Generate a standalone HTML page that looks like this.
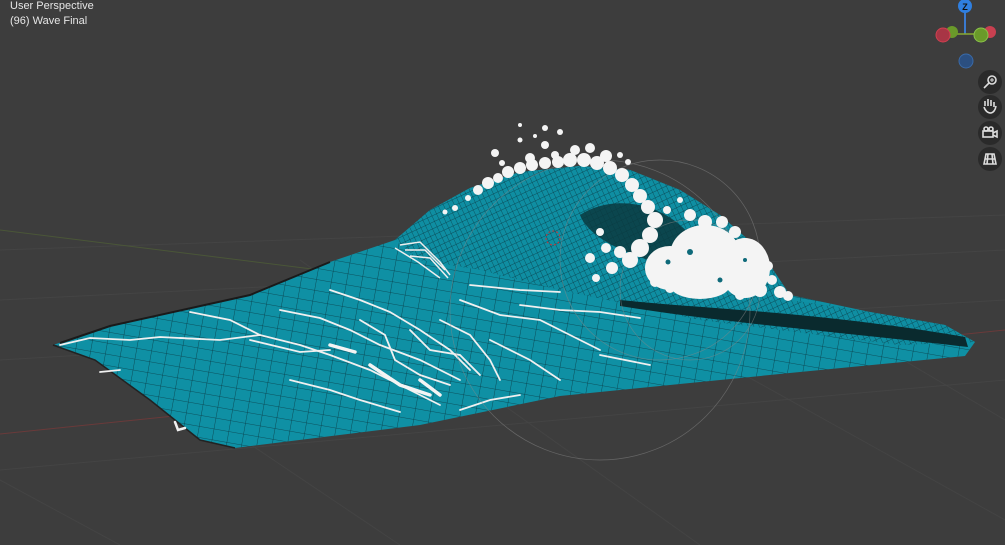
<!DOCTYPE html>
<html><head><meta charset="utf-8"><style>
html,body{margin:0;padding:0;background:#3d3d3d;width:1005px;height:545px;overflow:hidden}
.t{position:absolute;left:10px;color:#e6e6e6;font:11px "Liberation Sans",sans-serif}
</style></head><body>
<svg width="1005" height="545" style="position:absolute;left:0;top:0">
<defs>
<pattern id="g" width="15" height="11" patternUnits="userSpaceOnUse" patternTransform="rotate(10)">
<path d="M0 0H15M0 0V11" stroke="#0a3c46" stroke-width="0.8" fill="none"/>
</pattern>
<pattern id="g2" width="5" height="6" patternUnits="userSpaceOnUse" patternTransform="rotate(-25)">
<path d="M0 0H5M0 0V6" stroke="#0a3c46" stroke-width="0.7" fill="none"/>
</pattern>
</defs>
<rect width="1005" height="545" fill="#3d3d3d"/>
<g stroke="#444" stroke-width="1" fill="none">
<path d="M0 300 L1005 250M0 360 L1005 300M0 470 L1005 380M0 250 L1005 215M120 545 L0 480M400 545 L80 330M700 545 L300 260M1005 520 L520 250M1005 420 L700 240"/>
</g>
<path d="M0 434 L1005 330" stroke="#6a3a3a" stroke-width="1"/>
<path d="M0 230 L560 300" stroke="#4a5638" stroke-width="1"/>
<!-- sheet -->
<path id="sh" d="M53 345 L110 326 L250 295 L330 262 L395 240 L430 210 L470 188 L520 172 L580 166 L630 170 L680 190 L720 215 L760 250 L790 295 L870 312 L945 325 L975 342 L965 356 L800 372 L560 396 L420 425 L235 448 L200 440 L150 400 L95 360 Z" fill="#0f90a4"/>
<path d="M53 345 L110 326 L250 295 L330 262 L395 240 L430 210 L470 188 L520 172 L580 166 L630 170 L680 190 L720 215 L760 250 L790 295 L870 312 L945 325 L975 342 L965 356 L800 372 L560 396 L420 425 L235 448 L200 440 L150 400 L95 360 Z" fill="url(#g)"/>
<path d="M395 240 L430 210 L470 188 L520 172 L580 166 L630 170 L680 190 L720 215 L760 250 L790 300 L870 312 L945 325 L975 342 L900 345 L700 320 L560 290 L480 270 L420 260 Z" fill="#0f8ea2"/>
<path d="M395 240 L430 210 L470 188 L520 172 L580 166 L630 170 L680 190 L720 215 L760 250 L790 300 L870 312 L945 325 L975 342 L900 345 L700 320 L560 290 L480 270 L420 260 Z" fill="url(#g2)"/>
<path d="M580 215 C610 195 660 200 690 235 L665 265 C630 255 590 240 580 215Z" fill="#0b3a40" opacity="0.85"/>
<path d="M620 300 C720 310 820 312 965 337 L968 347 C820 330 720 322 620 306Z" fill="#0a2a2e"/>
<path d="M53 345 L95 360 L150 400 L200 440 L235 448" stroke="#222" stroke-width="1.5" fill="none"/>
<path d="M60 343 L110 326 L250 295 L330 262" stroke="#1a1a1a" stroke-width="2" fill="none"/>
<!-- streaks -->
<g stroke="#f0f0f0" stroke-linecap="round" fill="none" stroke-width="1.8">
<path d="M60 345 L90 338 L130 340 L160 337 L200 339"/>
<path d="M180 338 L220 340 L260 335 L300 345 L330 355 L370 370 L410 390 L440 405"/>
<path d="M190 312 L230 320 L260 335"/>
<path d="M280 310 L320 318 L350 330 L380 345 L420 360 L460 380"/>
<path d="M330 290 L360 300 L390 312 L420 330 L450 350 L470 370"/>
<path d="M360 320 L385 335 L395 360 L420 375 L450 385"/>
<path d="M410 330 L430 350 L460 355 L480 375"/>
<path d="M440 320 L470 335 L490 360 L500 380"/>
<path d="M250 340 L300 352 L330 350"/>
<path d="M460 300 L500 315 L540 320 L570 335 L600 350"/>
<path d="M490 340 L530 360 L560 380"/>
<path d="M290 380 L330 390 L360 400 L400 412"/>
<path d="M460 410 L490 400 L520 395"/>
<path d="M520 305 L560 310 L600 312 L640 318"/>
<path d="M470 285 L520 290 L560 292"/>
<path d="M600 355 L650 365"/>
<path d="M100 372 L120 370"/>
<path d="M175 422 L178 430 L185 428" stroke-width="2.5"/>
</g>
<g stroke="#f4f4f4" stroke-width="3.5" stroke-linecap="round" fill="none">
<path d="M370 365 L400 385 L430 395"/><path d="M330 345 L355 352"/><path d="M420 380 L440 395"/>
</g>
<g stroke="#eee" stroke-width="1.5" fill="none">
<path d="M400 245 L420 242 L440 262 L450 275M405 250 L425 250 L445 270M410 256 L430 258 L448 278M395 248 L418 262 L440 278"/>
</g>
<!-- guide circles -->
<g stroke="#888" stroke-width="0.7" fill="none" opacity="0.55">
<circle cx="660" cy="260" r="100"/><circle cx="600" cy="310" r="150"/><circle cx="690" cy="290" r="70"/>
</g>
<circle cx="553" cy="238" r="7" stroke="#c33" stroke-dasharray="2 2" fill="none"/>
<!-- foam -->
<g fill="#f4f4f4">
<circle cx="478" cy="190" r="5"/><circle cx="488" cy="183" r="6"/><circle cx="498" cy="178" r="5"/><circle cx="508" cy="172" r="6"/><circle cx="520" cy="168" r="6"/><circle cx="532" cy="165" r="6"/><circle cx="545" cy="163" r="6"/><circle cx="558" cy="162" r="6"/><circle cx="570" cy="160" r="7"/><circle cx="584" cy="160" r="7"/><circle cx="597" cy="163" r="7"/><circle cx="610" cy="168" r="7"/><circle cx="622" cy="175" r="7"/><circle cx="632" cy="185" r="7"/><circle cx="640" cy="196" r="7"/>
<circle cx="468" cy="198" r="3"/><circle cx="455" cy="208" r="3"/><circle cx="445" cy="212" r="2.5"/>
<circle cx="495" cy="153" r="4"/><circle cx="502" cy="163" r="3"/><circle cx="520" cy="140" r="2.5"/><circle cx="530" cy="158" r="5"/><circle cx="545" cy="145" r="4"/><circle cx="560" cy="132" r="3"/><circle cx="575" cy="150" r="5"/><circle cx="590" cy="148" r="5"/><circle cx="606" cy="156" r="6"/><circle cx="620" cy="155" r="3"/><circle cx="628" cy="162" r="3"/><circle cx="545" cy="128" r="3"/><circle cx="555" cy="155" r="4"/><circle cx="520" cy="125" r="2"/><circle cx="535" cy="136" r="2"/>
<circle cx="648" cy="207" r="7"/><circle cx="655" cy="220" r="8"/><circle cx="650" cy="235" r="8"/><circle cx="640" cy="248" r="9"/><circle cx="630" cy="260" r="8"/><circle cx="620" cy="252" r="6"/><circle cx="612" cy="268" r="6"/><circle cx="606" cy="248" r="5"/><circle cx="590" cy="258" r="5"/><circle cx="600" cy="232" r="4"/><circle cx="596" cy="278" r="4"/>
<ellipse cx="705" cy="255" rx="35" ry="30"/><ellipse cx="745" cy="268" rx="25" ry="30"/><ellipse cx="670" cy="268" rx="25" ry="22"/><ellipse cx="700" cy="285" rx="30" ry="14"/>
<circle cx="690" cy="215" r="6"/><circle cx="705" cy="222" r="7"/><circle cx="722" cy="222" r="6"/><circle cx="735" cy="232" r="6"/><circle cx="745" cy="245" r="7"/><circle cx="760" cy="255" r="6"/><circle cx="768" cy="266" r="5"/><circle cx="772" cy="280" r="5"/><circle cx="780" cy="292" r="6"/><circle cx="788" cy="296" r="5"/><circle cx="760" cy="290" r="7"/><circle cx="740" cy="295" r="5"/><circle cx="667" cy="210" r="4"/><circle cx="680" cy="200" r="3"/><circle cx="670" cy="288" r="5"/><circle cx="655" cy="282" r="5"/>
</g>
<g fill="#0e6a7a"><circle cx="690" cy="252" r="3"/><circle cx="720" cy="280" r="2.5"/><circle cx="668" cy="262" r="2.5"/><circle cx="745" cy="260" r="2"/></g>
<!-- gizmo -->
<g>
<line x1="965" y1="8" x2="965" y2="34" stroke="#3a7ad0" stroke-width="2"/>
<line x1="950" y1="34" x2="982" y2="34" stroke="#8a3" stroke-width="1.5"/>
<circle cx="952" cy="32" r="6" fill="#6a9a2a"/>
<circle cx="990" cy="32" r="6" fill="#c84050"/>
<circle cx="943" cy="35" r="7" fill="#a83545" stroke="#d04050"/>
<circle cx="981" cy="35" r="7" fill="#6a9a2a" stroke="#8bc34a"/>
<circle cx="965" cy="6" r="7" fill="#2f7fe0"/>
<text x="965" y="10" font-family="Liberation Sans,sans-serif" font-size="9" font-weight="bold" fill="#111" text-anchor="middle">Z</text>
<circle cx="966" cy="61" r="7" fill="#2b4f80" stroke="#3a6aa8"/>
</g>
<g fill="#2a2a2a"><circle cx="990" cy="82" r="12"/><circle cx="990" cy="107" r="12"/><circle cx="990" cy="133" r="12"/><circle cx="990" cy="159" r="12"/></g>
<g stroke="#ddd" stroke-width="1.6" fill="none">
<circle cx="992" cy="80" r="4"/><line x1="989" y1="83" x2="984" y2="88"/><path d="M990 80H994M992 78V82" stroke-width="1"/>
<path d="M985 106 V101 M988 106 V99 M991 106 V100 M994 107 V102 M984 107 Q986 113 991 113 Q995 112 996 106"/>
<rect x="983" y="131" width="10" height="6"/><path d="M993 133 L997 131 V137 L993 135"/><circle cx="986" cy="129" r="2"/><circle cx="991" cy="129" r="2"/>
<path d="M984 164 L986 154 H994 L996 164 Z M985 159 H995 M988 154 L987 164 M992 154 L993 164"/>
</g>
</svg>
<div class="t" style="top:0px">User Perspective</div>
<div class="t" style="top:15px">(96) Wave Final</div>
</body></html>
